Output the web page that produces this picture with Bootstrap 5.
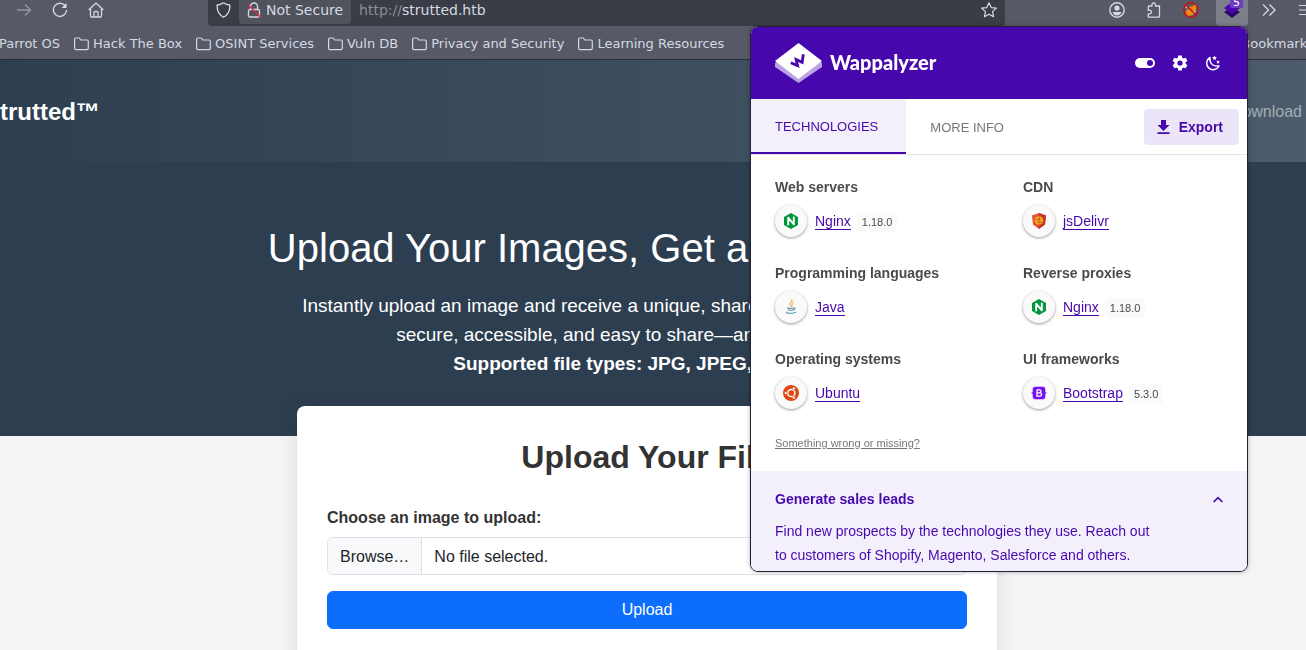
<!DOCTYPE html>
<html lang="en">
<head>
<meta charset="utf-8">
<meta name="viewport" content="width=device-width, initial-scale=1">
<title>Strutted</title>
<link href="https://cdn.jsdelivr.net/npm/bootstrap@5.3.0/dist/css/bootstrap.min.css" rel="stylesheet">
<style>
  :root { --violet: #4608ad; --lilac: #f4f0fb; --slate: #2c3e50; }
  body { height: 100vh; overflow: hidden; background: #f4f4f4; color: #333; font-family: "Liberation Sans", Arial, sans-serif; }
  svg { display: block; flex: none; }

  /* browser chrome */
  .chrome { position: relative; z-index: 2; margin: 0 -16px 0 -24px; background: #575966; color: #d3dae3; border-bottom: 1px solid #2b2e37; font: 14px/20px "DejaVu Sans", sans-serif; }
  .toolbar { height: 26px; padding-left: 32px; gap: 4px; }
  .tool { width: 32px; height: 26px; padding: 0 0 6px; border: 0; background: none; color: inherit; display: flex; align-items: center; justify-content: center; flex: none; position: relative; }
  .tool.pressed { background: #7c7f8a; border-radius: 0 0 4px 4px; }
  .tool .count { position: absolute; left: 14px; top: -6px; width: 13px; height: 14px; background: #6f3cc4; color: #fff; font-size: 11px; line-height: 17px; border-radius: 2px; }
  .addons { gap: 5px; }
  .address { height: 26px; margin: 0 92px; padding-bottom: 6px; background: #3b3d46; border-radius: 0 0 4px 4px; }
  .secure { height: 24px; padding: 0 8px 4px; gap: 5px; background: #50535c; border: 0; color: inherit; border-radius: 0 0 4px 4px; align-self: flex-start; white-space: nowrap; }
  .scheme { color: #8b8d97; }
  .bookmarks { height: 33px; padding: 2px 8px 0 4px; gap: 14px; white-space: nowrap; font-size: 13px; }
  .bookmarks a { color: inherit; text-decoration: none; display: flex; align-items: center; gap: 4px; }

  /* site */
  .site { margin: 0 -12px 0 -24px; }
  .topnav { height: 102px; padding: 2px 16px 0 8px; background: linear-gradient(90deg, #2c3e50, #4c5c6c); }
  .topnav .navbar-brand { font-size: 24px; font-weight: 700; color: #fff; }
  .topnav .nav-link { color: #a5adb6; }
  .hero { height: 274px; padding-top: 62px; background: var(--slate); color: #fff; }
  .hero h1 { font-size: 40px; line-height: 48px; font-weight: 400; margin-bottom: 19px; }
  .hero p { font-size: 19px; line-height: 29px; }
  .uploader { max-width: 700px; margin: -30px auto 0; padding: 32px 30px 48px; background: #fff; border-radius: 8px; box-shadow: 0 4px 20px rgba(0,0,0,.1); position: relative; }
  .uploader h2 { font-size: 32px; line-height: 38px; font-weight: 700; margin-bottom: 30px; }
  .uploader label { font-weight: 700; line-height: 24px; margin-bottom: 7px; }
  .picker { border: 1px solid #dee2e6; border-radius: 6px; height: 38px; overflow: hidden; position: relative; color: #212529; line-height: 24px; }
  .picker input { position: absolute; inset: 0; opacity: 0; width: 100%; }
  .picker span { padding: 7px 12px; }
  .picker .browse { background: #f8f9fa; border-right: 1px solid #dee2e6; }

  /* extension popup */
  .popup { position: absolute; top: 26px; right: 74px; width: 498px; background: #fff; border: 1px solid #24203a; border-radius: 8px; overflow: hidden; font: 14px/20px "Liberation Sans", Arial, sans-serif; color: #4a4a4a; box-shadow: 0 0 4px rgba(0,0,0,.3); }
  .popup button { font: inherit; border: 0; background: none; }
  .popup header { height: 72px; padding: 0 26px 0 24px; background: var(--violet); color: #fff; }
  .brandname { font: 900 20px/24px "Lato", sans-serif; padding-bottom: 2px; }
  .popup header button { color: #fff; padding: 0; }
  .tabs { height: 56px; border-bottom: 1px solid #e4e4e4; }
  .popup .tabs .tab { font-size: 13px; padding: 3px 28px 0 24px; color: #777; align-self: stretch; }
  .popup .tabs .active { background: var(--lilac); color: var(--violet); border-bottom: 2px solid var(--violet); }
  .popup .export { height: 36px; padding: 0 16px 0 12px; margin-right: 8px; gap: 8px; background: #ece5f7; color: var(--violet); font-weight: 700; border-radius: 4px; }
  .techs { padding: 22px 0 0 24px; --bs-gutter-x: 0; }
  .techs section { height: 66px; margin-bottom: 20px; flex: 0 0 248px; }
  .techs section:nth-child(even) { flex: 1 1 0; }
  .techs h3 { font-size: 14px; line-height: 20px; font-weight: 700; margin-bottom: 8px; }
  .disc { width: 32px; height: 32px; border-radius: 50%; background: #fafafa; box-shadow: 0 1px 3px rgba(0,0,0,.4); margin-right: 8px; }
  .techs a { color: var(--violet); font-size: 14px; line-height: 16px; text-decoration: none; border-bottom: 1px solid var(--violet); }
  .ver { font-size: 11px; line-height: 20px; padding: 0 5px; margin: 2px 0 0 6px; background: #fafafa; border-radius: 4px; }
  .wrong { display: block; font-size: 11px; line-height: 16px; color: #777; padding: 0 24px 20px; }
  .leads { background: var(--lilac); color: var(--violet); padding: 16px 24px 4px; line-height: 24px; }
  .leads p { margin: 8px 0 0; max-width: 388px; }
</style>
</head>
<body>
<svg width="0" height="0" class="position-absolute">
  <symbol id="folder" viewBox="0 0 15 14"><path d="M.6 11.3V2.2Q.6 1 1.8 1h3.4l1.6 2h6.2q1.300 0 1.300 1.300v7q0 1.300-1.300 1.300H1.900Q.6 12.600.6 11.300z" fill="none" stroke="currentColor" stroke-width="1.200"/></symbol>
  <symbol id="nginx" viewBox="0 0 16 16"><path d="M8 0l7 4v8l-7 4-7-4V4z" fill="#009639"/><path d="M5.200 11.500V4.700l5.600 6.600V4.500" fill="none" stroke="#fff" stroke-width="1.900" stroke-linejoin="round" stroke-linecap="round"/></symbol>
</svg>

<div class="chrome">
  <div class="toolbar d-flex">
    <button class="tool" aria-label="Forward"><svg width="16" height="16" viewBox="0 0 16 16" fill="none" stroke="#9596a0" stroke-width="1.300"><path d="M1 8h13.500M9 2.500L14.500 8 9 13.500"/></svg></button>
    <button class="tool" aria-label="Reload"><svg width="16" height="16" viewBox="0 0 16 16" fill="none" stroke="currentColor" stroke-width="1.400"><path d="M13 3.500A6.600 6.600 0 1 0 14.600 8"/><path d="M14.500 1v5h-5z" fill="currentColor" stroke="none"/></svg></button>
    <button class="tool" aria-label="Home"><svg width="16" height="16" viewBox="0 0 16 16" fill="none" stroke="currentColor" stroke-width="1.300" stroke-linejoin="round"><path d="M.7 8L8 1l7.300 7M2.500 6.500v7.300q0 1.200 1.200 1.200h8.600q1.200 0 1.200-1.200V6.500M6 15v-4.500q0-1 1-1h2q1 0 1 1V15"/></svg></button>

    <div class="address d-flex flex-grow-1 align-items-center">
      <svg class="mx-2" width="15" height="16" viewBox="0 0 15 16" fill="none" stroke="currentColor" stroke-width="1.300" stroke-linejoin="round"><path d="M7.500.8q3 2 6.300 2.200Q14.500 11 7.500 15.300.500 11 1.200 3 4.500 2.800 7.500.8z"/></svg>
      <button class="secure d-flex align-items-center"><svg width="14" height="16" viewBox="0 0 14 16" fill="none" stroke="currentColor" stroke-width="1.300"><rect x="1.500" y="7.500" width="11" height="7.500" rx="1.500"/><path d="M3.500 7.500V4.500a3.500 3.500 0 0 1 7 0v3"/><path d="M0 2l14 13.500" stroke="#e22850"/></svg>Not Secure</button>
      <div class="flex-grow-1 ps-2"><span class="scheme">http://</span>strutted.htb</div>
      <svg class="mx-2" width="16" height="16" viewBox="0 0 16 16" fill="none" stroke="currentColor" stroke-width="1.200" stroke-linejoin="round"><path d="M8 .8l2.200 4.800 5.200.5-3.900 3.500 1.100 5.200L8 12.200l-4.600 2.600 1.100-5.200L.6 6.100l5.200-.5z"/></svg>
    </div>

    <div class="addons d-flex">
      <button class="tool" aria-label="Account"><svg width="16" height="16" viewBox="0 0 16 16"><circle cx="8" cy="8" r="7.200" fill="none" stroke="currentColor" stroke-width="1.400"/><circle cx="8" cy="6" r="2.600" fill="currentColor"/><path d="M3.500 10h9Q11 13.500 8 13.500T3.500 10z" fill="currentColor"/></svg></button>
      <button class="tool" aria-label="Extensions"><svg width="16" height="16" viewBox="0 0 16 16" fill="none" stroke="currentColor" stroke-width="1.300" stroke-linejoin="round"><path d="M6 4V2.500a1.700 1.700 0 0 1 3.400 0V4h4.100v10.300q0 .9-.9.900H2.300V11.800h1.500a1.700 1.700 0 0 0 0-3.400H2.300V4.900Q2.300 4 3.200 4z"/></svg></button>
      <button class="tool" aria-label="Proxy off"><svg width="16" height="16" viewBox="0 0 16 16"><path d="M3 9l3-3 1-2 2 1 3-3 2 1-1 5-3 5-4 1-4-1z" fill="#ed8a13"/><path d="M2 3l3 1-2 3zM9 10l4-1-2 3z" fill="#d9e0e6"/><circle cx="8" cy="8" r="7.200" fill="none" stroke="#c1121a" stroke-width="1.500"/><path d="M3 3l10 10" stroke="#c1121a" stroke-width="1.500"/></svg></button>
      <button class="tool pressed ms-1" aria-label="Wappalyzer"><svg width="16" height="16" viewBox="0 0 16 16"><path d="M0 10l8-5 8 5-8 6z" fill="#2b0a70"/><path d="M0 6l8-6 8 6-8 6z" fill="#4608ad"/></svg><span class="count">5</span></button>
      <button class="tool" aria-label="More tools"><svg width="14" height="14" viewBox="0 0 14 14" fill="none" stroke="currentColor" stroke-width="1.300"><path d="M1 1.500L6.500 7 1 12.500M7.500 1.500L13 7l-5.500 5.500"/></svg></button>
      <button class="tool" aria-label="Menu"><svg width="14" height="12" viewBox="0 0 14 12" stroke="currentColor" stroke-width="1.200"><path d="M0 1.500h14M0 6h14M0 10.500h14"/></svg></button>
    </div>
  </div>

  <nav class="bookmarks d-flex" aria-label="Bookmarks">
    <a href="#"><svg width="15" height="14"><use href="#folder"/></svg>Parrot OS</a>
    <a href="#"><svg width="15" height="14"><use href="#folder"/></svg>Hack The Box</a>
    <a href="#"><svg width="15" height="14"><use href="#folder"/></svg>OSINT Services</a>
    <a href="#"><svg width="15" height="14"><use href="#folder"/></svg>Vuln DB</a>
    <a href="#"><svg width="15" height="14"><use href="#folder"/></svg>Privacy and Security</a>
    <a href="#"><svg width="15" height="14"><use href="#folder"/></svg>Learning Resources</a>
    <a href="#" class="ms-auto">Bookmarks</a>
  </nav>

  <aside class="popup">
    <header class="d-flex align-items-center">
      <svg width="47" height="40" viewBox="0 0 47 40"><path d="M0 20v4l23.500 16L47 24v-4L23.500 6z" fill="#b9a3e0"/><path d="M0 18L23.500 0 47 18 23.500 36z" fill="#fff"/><path d="M15.500 19l6.500 3.500-.8-6.200 5.700 3.500 2-8" transform="rotate(-6 23 17)" fill="none" stroke="#4608ad" stroke-width="2.800"/></svg>
      <span class="brandname ms-2">Wappalyzer</span>
      <button class="ms-auto" aria-label="Toggle"><svg width="20" height="12" viewBox="0 0 20 12"><rect y="1" width="20" height="10" rx="5" fill="#fff"/><circle cx="15" cy="6" r="3" fill="#4608ad"/></svg></button>
      <button class="ms-3" aria-label="Settings"><svg width="18" height="18" viewBox="0 0 24 24" fill="#fff"><path d="M12 15.500A3.500 3.500 0 1 1 12 8.500a3.500 3.500 0 0 1 0 7m7.430-2.530c.04-.32.07-.64.07-.97s-.03-.66-.07-1l2.110-1.630c.19-.15.24-.42.12-.64l-2-3.460c-.12-.22-.39-.31-.61-.22l-2.490 1c-.52-.39-1.060-.73-1.690-.98l-.37-2.650A.506.506 0 0 0 14 2h-4c-.25 0-.46.18-.5.420l-.37 2.650c-.63.250-1.170.590-1.690.980l-2.490-1c-.22-.09-.49 0-.61.220l-2 3.460c-.13.220-.07.490.12.640L4.570 11c-.04.340-.07.670-.07 1s.03.650.07.970l-2.110 1.660c-.19.150-.25.420-.12.640l2 3.460c.12.220.39.300.61.220l2.490-1.010c.52.400 1.060.740 1.690.990l.37 2.650c.04.240.25.420.5.420h4c.25 0 .46-.18.500-.42l.37-2.650c.63-.26 1.170-.59 1.690-.99l2.490 1.010c.22.080.49 0 .61-.22l2-3.460c.12-.22.07-.49-.12-.64z"/></svg></button>
      <button class="ms-3" aria-label="Dark mode"><svg width="16" height="16" viewBox="0 0 16 16"><path d="M5 2.500A6.500 6.500 0 1 0 14 11Q8 11.500 6 8 4.500 5.500 5 2.500z" fill="none" stroke="#fff" stroke-width="1.500" stroke-linejoin="round"/><path d="M9.500.5l.7 1.600 1.700.2-1.300 1.100.4 1.700-1.500-.9-1.500.9.400-1.700-1.300-1.100 1.700-.2zM13 5l.6 1.300 1.400.1-1.100.9.400 1.400L13 8l-1.200.7.400-1.400-1.100-.9 1.400-.1z" fill="#fff"/></svg></button>
    </header>
    <div class="tabs d-flex align-items-center">
      <button class="tab active">TECHNOLOGIES</button>
      <button class="tab">MORE INFO</button>
      <button class="export d-flex align-items-center ms-auto"><svg width="15" height="14" viewBox="0 0 15 14" fill="currentColor"><path d="M5 0h5v5h3.500L7.500 11 1.500 5H5zM1.500 12.200h12V14h-12z"/></svg>Export</button>
    </div>

    <div class="techs d-flex flex-wrap">
      <section>
        <h3>Web servers</h3>
        <div class="d-flex align-items-center"><span class="disc d-flex align-items-center justify-content-center"><svg width="16" height="16"><use href="#nginx"/></svg></span><a href="#">Nginx</a><span class="ver">1.18.0</span></div>
      </section>
      <section>
        <h3>CDN</h3>
        <div class="d-flex align-items-center"><span class="disc d-flex align-items-center justify-content-center"><svg width="16" height="16" viewBox="0 0 16 16"><path d="M8 0l7 2.500-1 9L8 16l-6-4.500-1-9z" fill="#e84d3d"/><path d="M8 0l7 2.500-1 9L8 16z" fill="#c0392b"/><circle cx="8" cy="7.500" r="4.300" fill="#f4a51c"/><path d="M5 6.500h4l-2 3h4M8.500 4v3" fill="none" stroke="#c8501f" stroke-width=".9"/></svg></span><a href="#">jsDelivr</a></div>
      </section>
      <section>
        <h3>Programming languages</h3>
        <div class="d-flex align-items-center"><span class="disc d-flex align-items-center justify-content-center"><svg width="16" height="16" viewBox="0 0 16 16" fill="none" stroke-linecap="round"><path d="M9 .6Q9.800 2 7.500 3.600T7.800 7.500M10.300 3.500Q7.800 4.600 9 6 9.500 7 8.700 7.600" stroke="#f29111" stroke-width=".9"/><path d="M5 8.600Q3 9.300 6 9.400q3 .1 5-.5 2 0 1 1.200-.5.600-1.300.8M5.500 11q2.500.6 5 0M4 13q-2.500.7 1 1.200 5 .6 7.500-.7" stroke="#37829b" stroke-width=".9"/></svg></span><a href="#">Java</a></div>
      </section>
      <section>
        <h3>Reverse proxies</h3>
        <div class="d-flex align-items-center"><span class="disc d-flex align-items-center justify-content-center"><svg width="16" height="16"><use href="#nginx"/></svg></span><a href="#">Nginx</a><span class="ver">1.18.0</span></div>
      </section>
      <section>
        <h3>Operating systems</h3>
        <div class="d-flex align-items-center"><span class="disc d-flex align-items-center justify-content-center"><svg width="16" height="16" viewBox="0 0 16 16"><circle cx="8" cy="8" r="8" fill="#dd4814"/><circle cx="8.300" cy="8" r="3.600" fill="none" stroke="#fff" stroke-width="1.500"/><g fill="#fff" stroke="#dd4814" stroke-width=".6"><circle cx="2.900" cy="8" r="1.500"/><circle cx="10.800" cy="3.400" r="1.500"/><circle cx="10.800" cy="12.600" r="1.500"/></g></svg></span><a href="#">Ubuntu</a></div>
      </section>
      <section>
        <h3>UI frameworks</h3>
        <div class="d-flex align-items-center"><span class="disc d-flex align-items-center justify-content-center"><svg width="16" height="16" viewBox="0 0 16 16"><path d="M2 4q0-2 2-2h8q2 0 2 2v2.500q0 1.500 1.500 1.500Q14 8 14 9.500V12q0 2-2 2H4q-2 0-2-2V9.500Q2 8 .5 8 2 8 2 6.500z" fill="#7611f5" stroke="#7611f5" stroke-width=".6"/><path d="M6 4.800h2.500a1.500 1.500 0 0 1 0 3H6m0 0h2.900a1.700 1.700 0 0 1 0 3.400H6V4.800" fill="none" stroke="#fff" stroke-width="1.300"/></svg></span><a href="#">Bootstrap</a><span class="ver">5.3.0</span></div>
      </section>
    </div>
    <a class="wrong" href="#">Something wrong or missing?</a>
    <div class="leads">
      <div class="d-flex align-items-center justify-content-between fw-bold">Generate sales leads<svg width="10" height="7" viewBox="0 0 10 7" fill="none" stroke="currentColor" stroke-width="1.700"><path d="M.6 6L5 1.600 9.400 6"/></svg></div>
      <p>Find new prospects by the technologies they use. Reach out to customers of Shopify, Magento, Salesforce and others.</p>
    </div>
  </aside>
</div>

<div class="site">
  <nav class="topnav d-flex align-items-center justify-content-between">
    <a class="navbar-brand" href="#">Strutted™</a>
    <a class="nav-link" href="#">Download</a>
  </nav>
  <main>
    <div class="hero text-center">
      <h1>Upload Your Images, Get a Shareable Link</h1>
      <p>Instantly upload an image and receive a unique, shareable link. Keep your images<br>secure, accessible, and easy to share—anywhere, anytime.<br><strong>Supported file types: JPG, JPEG, PNG, GIF</strong></p>
    </div>
    <form class="uploader">
      <h2 class="text-center">Upload Your File</h2>
      <label for="file">Choose an image to upload:</label>
      <div class="picker d-flex mb-3"><span class="browse">Browse…</span><span>No file selected.</span><input type="file" id="file"></div>
      <button type="button" class="btn btn-primary w-100">Upload</button>
    </form>
  </main>
</div>
<script src="https://cdn.jsdelivr.net/npm/bootstrap@5.3.0/dist/js/bootstrap.bundle.min.js"></script>
</body>
</html>
